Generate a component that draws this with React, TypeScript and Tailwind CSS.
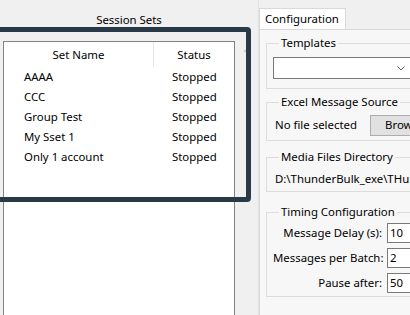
import React from "react";

const sets = [
  { name: "AAAA", status: "Stopped" },
  { name: "CCC", status: "Stopped" },
  { name: "Group Test", status: "Stopped" },
  { name: "My Sset 1", status: "Stopped" },
  { name: "Only 1 account", status: "Stopped" },
];

const timing = [
  { label: "Message Delay (s):", value: "10" },
  { label: "Messages per Batch:", value: "2" },
  { label: "Pause after:", value: "50" },
];

function Group({ title, className, children }: { title: string; className?: string; children: React.ReactNode }) {
  return (
    <fieldset className={"w-[170px] border border-[#dcdcdc] pl-[6px] " + (className ?? "")}>
      <legend className="ml-[6px] px-[2px] leading-[16px]">{title}</legend>
      {children}
    </fieldset>
  );
}

export default function App() {
  return (
    <div className="relative w-[410px] h-[315px] overflow-hidden bg-[#f0f0f0] flex text-[11.4px] text-black font-['Noto_Sans',sans-serif]">
      {/* left: session list */}
      <div className="w-[259px] shrink-0 flex flex-col border-r border-[#e2e2e2]">
        <div className="h-[41px] flex items-center justify-center pb-[2px]">Session Sets</div>
        <div className="flex flex-1 min-h-0">
          <div className="ml-[3px] w-[232px] bg-white border border-b-0 border-[#828282]">
            <div className="h-[25px] flex items-center">
              <div className="w-[150px] text-center border-r border-[#e5e5e5] h-full flex items-center justify-center">Set Name</div>
              <div className="flex-1 text-center">Status</div>
            </div>
            {sets.map((s) => (
              <div key={s.name} className="h-[20px] flex items-center">
                <div className="w-[168px] pl-[20px]">{s.name}</div>
                <div>{s.status}</div>
              </div>
            ))}
          </div>
          <div className="flex-1 flex justify-center pt-[6px]">
            <svg width="8" height="6" viewBox="0 0 8 6">
              <path d="M1 5 L4 2 L7 5" fill="none" stroke="#c4c4c4" strokeWidth="1.2" />
            </svg>
          </div>
        </div>
      </div>

      {/* right: configuration tab */}
      <div className="flex-1 flex flex-col pt-[8px]">
        <div className="w-[87px] h-[21px] bg-white border border-b-0 border-[#d9d9d9] pl-[5px] flex items-center">Configuration</div>
        <div className="flex-1 bg-[#f7f7f7] border-l border-t border-[#d9d9d9] pl-[6px] pt-[5px] flex flex-col">
          <Group title="Templates" className="pb-[9px]">
            <div className="mt-[6px] h-[22px] w-[141px] bg-white border border-[#7a7a7a] flex items-center justify-end pr-[8px]">
              <svg width="8" height="5" viewBox="0 0 8 5">
                <path d="M0.5 0.5 L4 4 L7.5 0.5" fill="none" stroke="#606060" strokeWidth="1" />
              </svg>
            </div>
          </Group>

          <Group title="Excel Message Source" className="mt-[5px] pb-[3px]">
            <div className="mt-[3px] h-[24px] flex items-center">
              <span className="w-[97px] pl-[2px] whitespace-nowrap">No file selected</span>
              <div className="h-[21px] w-[60px] bg-[#e1e1e1] border border-[#adadad] flex items-center pl-[14px]">Browse...</div>
            </div>
          </Group>

          <Group title="Media Files Directory" className="mt-[8px] pb-[4px]">
            <div className="mt-[6px] h-[16px] flex items-center pl-[2px] whitespace-nowrap">D:\ThunderBulk_exe\THunderBulk</div>
          </Group>

          <Group title="Timing Configuration" className="mt-[12px] pb-[1px]">
            {timing.map((t) => (
              <div key={t.label} className="h-[25px] flex items-center">
                <span className="w-[114px] text-right pr-[5px] whitespace-nowrap">{t.label}</span>
                <div className="h-[20px] w-[50px] bg-white border border-[#7a7a7a] flex items-center pl-[2px]">{t.value}</div>
              </div>
            ))}
          </Group>
        </div>
      </div>

      {/* highlight frame drawn over the list */}
      <div className="absolute left-[-10px] top-[27px] w-[261px] h-[175px] border-[5px] border-[#283a48] rounded-r-[4px] pointer-events-none" />
    </div>
  );
}
